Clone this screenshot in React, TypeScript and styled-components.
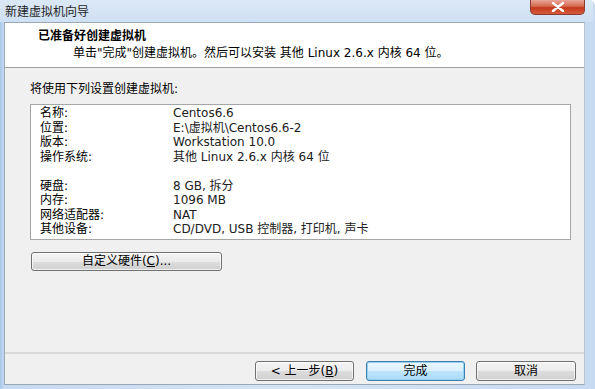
import * as React from 'react';
import styled, { createGlobalStyle } from 'styled-components';

const GlobalStyle = createGlobalStyle`
    html, body {
        margin: 0;
        padding: 0;
        background: #ffffff;
    }
    body {
        font-family: "DejaVu Sans", "Noto Sans CJK SC", sans-serif;
        font-size: 12px;
        color: #000;
    }
`;

interface Setting {
    label: string;
    value: string;
}

const settings: Array<Setting | null> = [
    { label: '名称:', value: 'Centos6.6' },
    { label: '位置:', value: 'E:\\虚拟机\\Centos6.6-2' },
    { label: '版本:', value: 'Workstation 10.0' },
    { label: '操作系统:', value: '其他 Linux 2.6.x 内核 64 位' },
    null,
    { label: '硬盘:', value: '8 GB, 拆分' },
    { label: '内存:', value: '1096 MB' },
    { label: '网络适配器:', value: 'NAT' },
    { label: '其他设备:', value: 'CD/DVD, USB 控制器, 打印机, 声卡' }
];

export default function App() {
    return (
        <>
            <GlobalStyle />
            <Window>
                <TitleBar>
                    <Title>新建虚拟机向导</Title>
                    <CloseButton aria-label="关闭">
                        <svg width="14" height="10" viewBox="0 0 14 10">
                            <path d="M2 1 L12 9 M12 1 L2 9" stroke="#fff" strokeWidth="2.4" strokeLinecap="round" />
                        </svg>
                    </CloseButton>
                </TitleBar>
                <Client>
                    <Header>
                        <Heading>已准备好创建虚拟机</Heading>
                        <SubHeading>单击"完成"创建虚拟机。然后可以安装 其他 Linux 2.6.x 内核 64 位。</SubHeading>
                    </Header>
                    <Body>
                        <Intro>将使用下列设置创建虚拟机:</Intro>
                        <SettingsBox>
                            {settings.map((s, i) =>
                                s ? (
                                    <SettingRow key={i}>
                                        <SettingLabel>{s.label}</SettingLabel>
                                        <SettingValue>{s.value}</SettingValue>
                                    </SettingRow>
                                ) : (
                                    <SettingRow key={i} />
                                )
                            )}
                        </SettingsBox>
                        <CustomButton>
                            自定义硬件(<u>C</u>)...
                        </CustomButton>
                    </Body>
                    <Footer>
                        <DialogButton>
                            &lt; 上一步(<u>B</u>)
                        </DialogButton>
                        <DialogButton primary>完成</DialogButton>
                        <DialogButton wide>取消</DialogButton>
                    </Footer>
                </Client>
            </Window>
        </>
    );
}

const Window = styled.div`
    width: 595px;
    height: 389px;
    box-sizing: border-box;
    display: flex;
    flex-direction: column;
    background: linear-gradient(to right, #a9c7ea 0px, #c6daf1 4px, #d4e3f5 50%, #c6daf1 100%);
    border-top-right-radius: 6px;
    padding: 0 10px 4px 4px;
    overflow: hidden;
`;

const TitleBar = styled.div`
    height: 22px;
    flex: none;
    display: flex;
    align-items: flex-start;
    justify-content: space-between;
    margin-left: -4px;
    margin-right: -8px;
    padding-left: 5px;
    background: linear-gradient(to bottom, #dbe8f6, #cfe0f3);
`;

const Title = styled.div`
    font-size: 12px;
    line-height: 24px;
    color: #1e1e1e;
`;

const CloseButton = styled.div`
    width: 55px;
    height: 15px;
    margin-right: 8px;
    box-sizing: border-box;
    display: flex;
    align-items: center;
    justify-content: center;
    border: 1px solid #8a3a30;
    border-top: none;
    border-radius: 0 0 5px 5px;
    background: linear-gradient(to bottom, #e9a597 0%, #d6694f 45%, #c4381c 55%, #d65a3e 100%);
`;

const Client = styled.div`
    flex: 1;
    display: flex;
    flex-direction: column;
    background: #f0f0f0;
    border: 1px solid #9aa7b6;
    border-right-color: #b8c3cf;
    min-height: 0;
`;

const Header = styled.div`
    height: 45px;
    flex: none;
    box-sizing: border-box;
    background: #ffffff;
    border-bottom: 1px solid #a0a0a0;
    padding: 6px 0 0 33px;
`;

const Heading = styled.div`
    font-weight: bold;
    font-size: 12px;
    line-height: 14px;
`;

const SubHeading = styled.div`
    padding-left: 35px;
    margin-top: 3px;
    font-size: 12px;
    line-height: 15px;
`;

const Body = styled.div`
    flex: 1;
    display: flex;
    flex-direction: column;
    align-items: flex-start;
    padding: 14px 13px 0 25px;
    border-bottom: 2px solid #d8d8d8;
`;

const Intro = styled.div`
    line-height: 15px;
`;

const SettingsBox = styled.div`
    align-self: stretch;
    margin-top: 7px;
    background: #ffffff;
    border: 1px solid #a6a6a6;
    padding: 1px 0 2px 9px;
`;

const SettingRow = styled.div`
    display: flex;
    height: 14.5px;
    line-height: 14.5px;
    white-space: nowrap;
`;

const SettingLabel = styled.span`
    width: 133px;
    flex: none;
`;

const SettingValue = styled.span`
    color: #202020;
`;

const ButtonBase = styled.button`
    box-sizing: border-box;
    height: 19px;
    padding: 0;
    font-family: "DejaVu Sans", "Noto Sans CJK SC", sans-serif;
    font-size: 12px;
    line-height: 15px;
    color: #000;
    border: 1px solid #707070;
    border-radius: 3px;
    background: linear-gradient(to bottom, #f4f4f4 0%, #ebebeb 50%, #dddddd 51%, #cfcfcf 100%);
    box-shadow: inset 0 0 0 1px rgba(255, 255, 255, 0.7);
`;

const CustomButton = styled(ButtonBase)`
    width: 191px;
    margin-top: 12px;
    margin-left: 1px;
`;

const Footer = styled.div`
    height: 30px;
    flex: none;
    display: flex;
    justify-content: flex-end;
    align-items: flex-start;
    gap: 11px;
    padding: 7px 8px 0 0;
    box-sizing: border-box;
`;

const DialogButton = styled(ButtonBase)<{ primary?: boolean; wide?: boolean }>`
    width: ${p => (p.wide ? '100px' : '99px')};
    height: 20px;
    border-color: ${p => (p.primary ? '#3c7fb1' : '#707070')};
    background: ${p =>
        p.primary
            ? 'linear-gradient(to bottom, #eaf6fd 0%, #d9f0fc 50%, #bee6fd 51%, #a7d9f5 100%)'
            : 'linear-gradient(to bottom, #f4f4f4 0%, #ebebeb 50%, #dddddd 51%, #cfcfcf 100%)'};
    box-shadow: ${p =>
        p.primary ? 'inset 0 0 0 1px #98d1ef' : 'inset 0 0 0 1px rgba(255, 255, 255, 0.7)'};

    &:first-child {
        margin-right: 1px;
    }
`;
